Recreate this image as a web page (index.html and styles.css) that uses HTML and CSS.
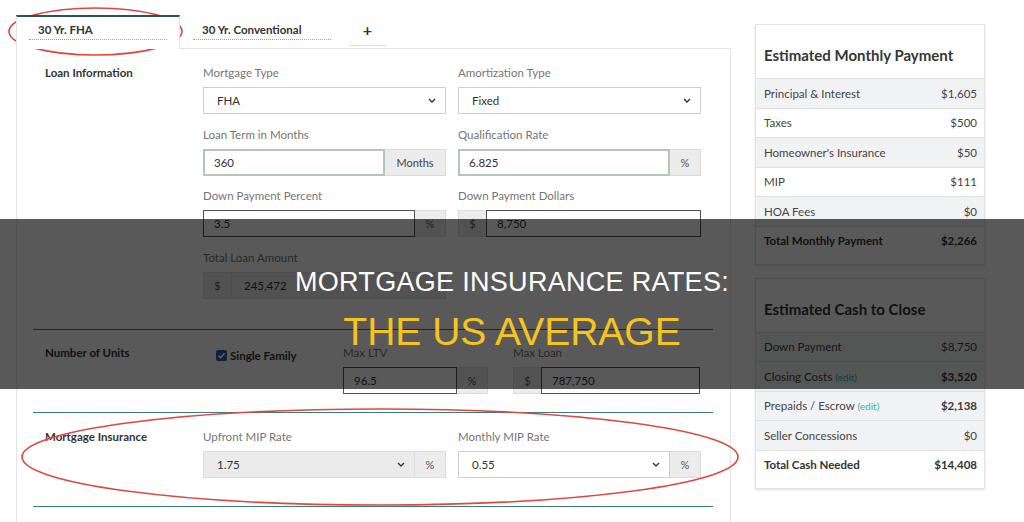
FILE: index.html
```html
<!DOCTYPE html>
<html lang="en">
<head>
    <meta charset="UTF-8">
    <meta name="viewport" content="width=device-width, initial-scale=1.0">
    <title>Mortgage Insurance Rates: The US Average</title>
    <link rel="stylesheet" href="styles.css">
</head>
<body>
    <div class="page">
        <div class="scenario">
            <div class="tabs">
                <div class="tab active"><span>30 Yr. FHA</span></div>
                <div class="tab"><span>30 Yr. Conventional</span></div>
                <div class="tab add"><span>+</span></div>
            </div>

            <div class="panel">
                <div class="section loan">
                    <div class="section-title">Loan Information</div>
                    <div class="fields">
                        <div class="field">
                            <label>Mortgage Type</label>
                            <div class="group">
                                <div class="select"><span>FHA</span><svg width="8" height="5" viewBox="0 0 8 5"><path d="M1 1l3 3 3-3" fill="none" stroke="#333" stroke-width="1.4"/></svg></div>
                            </div>
                        </div>
                        <div class="field">
                            <label>Amortization Type</label>
                            <div class="group">
                                <div class="select"><span>Fixed</span><svg width="8" height="5" viewBox="0 0 8 5"><path d="M1 1l3 3 3-3" fill="none" stroke="#333" stroke-width="1.4"/></svg></div>
                            </div>
                        </div>
                        <div class="field">
                            <label>Loan Term in Months</label>
                            <div class="group">
                                <input class="ok" type="text" value="360">
                                <span class="addon w-months">Months</span>
                            </div>
                        </div>
                        <div class="field">
                            <label>Qualification Rate</label>
                            <div class="group">
                                <input class="ok" type="text" value="6.825">
                                <span class="addon w-pct">%</span>
                            </div>
                        </div>
                        <div class="field">
                            <label>Down Payment Percent</label>
                            <div class="group">
                                <input class="dark" type="text" value="3.5">
                                <span class="addon w-pct">%</span>
                            </div>
                        </div>
                        <div class="field">
                            <label>Down Payment Dollars</label>
                            <div class="group">
                                <span class="addon pre w-dollar">$</span>
                                <input class="dark" type="text" value="8,750">
                            </div>
                        </div>
                        <div class="field">
                            <label>Total Loan Amount</label>
                            <div class="group">
                                <span class="addon pre w-dollar">$</span>
                                <input class="locked" type="text" value="245,472" readonly>
                            </div>
                        </div>
                    </div>
                </div>

                <div class="section units">
                    <div class="section-title">Number of Units</div>
                    <div class="unit-row">
                        <div class="check">
                            <svg width="11" height="11" viewBox="0 0 11 11"><rect width="11" height="11" rx="2" fill="#2c5cae"/><path d="M2.5 5.8l2 2 4-4.6" fill="none" stroke="#fff" stroke-width="1.7"/></svg>
                            <span>Single Family</span>
                        </div>
                        <div class="field ltv">
                            <label>Max LTV</label>
                            <div class="group">
                                <input class="dark" type="text" value="96.5">
                                <span class="addon w-pct">%</span>
                            </div>
                        </div>
                        <div class="field max-loan">
                            <label>Max Loan</label>
                            <div class="group">
                                <span class="addon pre w-dollar">$</span>
                                <input class="dark" type="text" value="787,750">
                            </div>
                        </div>
                    </div>
                </div>

                <div class="section insurance">
                    <div class="section-title">Mortgage Insurance</div>
                    <div class="fields">
                        <div class="field">
                            <label>Upfront MIP Rate</label>
                            <div class="group">
                                <div class="select grey"><span>1.75</span><svg width="8" height="5" viewBox="0 0 8 5"><path d="M1 1l3 3 3-3" fill="none" stroke="#333" stroke-width="1.4"/></svg></div>
                                <span class="addon w-pct">%</span>
                            </div>
                        </div>
                        <div class="field">
                            <label>Monthly MIP Rate</label>
                            <div class="group">
                                <div class="select"><span>0.55</span><svg width="8" height="5" viewBox="0 0 8 5"><path d="M1 1l3 3 3-3" fill="none" stroke="#333" stroke-width="1.4"/></svg></div>
                                <span class="addon w-pct">%</span>
                            </div>
                        </div>
                    </div>
                </div>
            </div>
        </div>

        <aside class="summary">
            <div class="card">
                <h2>Estimated Monthly Payment</h2>
                <div class="row shaded"><span>Principal &amp; Interest</span><span>$1,605</span></div>
                <div class="row"><span>Taxes</span><span>$500</span></div>
                <div class="row shaded"><span>Homeowner's Insurance</span><span>$50</span></div>
                <div class="row"><span>MIP</span><span>$111</span></div>
                <div class="row shaded"><span>HOA Fees</span><span>$0</span></div>
                <div class="row total"><span>Total Monthly Payment</span><span>$2,266</span></div>
            </div>

            <div class="card">
                <h2>Estimated Cash to Close</h2>
                <div class="row shaded"><span>Down Payment</span><span>$8,750</span></div>
                <div class="row shaded"><span>Closing Costs <a class="edit">(edit)</a></span><span class="strong">$3,520</span></div>
                <div class="row shaded"><span>Prepaids / Escrow <a class="edit">(edit)</a></span><span class="strong">$2,138</span></div>
                <div class="row shaded"><span>Seller Concessions</span><span>$0</span></div>
                <div class="row total"><span>Total Cash Needed</span><span>$14,408</span></div>
            </div>
        </aside>
    </div>

    <svg class="marks" width="1024" height="522" viewBox="0 0 1024 522">
        <ellipse cx="95.5" cy="31.5" rx="86.5" ry="23.5" fill="none" stroke="#dc4a3f" stroke-width="1.6"/>
        <ellipse cx="380" cy="457" rx="358" ry="48" fill="none" stroke="#dc4a3f" stroke-width="1.6"/>
    </svg>

    <div class="banner">
        <p class="banner-top">MORTGAGE INSURANCE RATES:</p>
        <p class="banner-bottom">THE US AVERAGE</p>
    </div>
</body>
</html>
```

FILE: styles.css
```css
* {
    box-sizing: border-box;
}
body {
    margin: 0;
    position: relative;
    height: 522px;
    overflow: hidden;
    font-family: Lato, "Open Sans", sans-serif;
    font-size: 11.5px;
    color: #333;
    background: #fff;
}
.page {
    display: flex;
    align-items: flex-start;
    padding: 15px 0 0 16px;
}
.scenario {
    width: 715px;
}

/* tabs */
.tabs {
    display: flex;
    align-items: flex-end;
}
.tab {
    position: relative;
    z-index: 1;
    margin-bottom: -1px;
    padding: 6px 12px 9px;
    border: 1px solid transparent;
    border-top: 2px solid transparent;
    border-bottom: none;
}
.tab span {
    display: block;
    width: 138px;
    padding: 0 0 2px 9px;
    border-bottom: 1px dotted #7fa6ba;
    font-weight: 700;
    line-height: 14px;
    color: #333;
}
.tab.active {
    background: #fff;
    border-color: #e3e3e3;
    border-top-color: #27525e;
}
.tab.add {
    margin-left: 4px;
    padding: 6px 0 3px;
}
.tab.add span {
    width: 37px;
    padding: 0 0 8px;
    border-bottom: 1px solid #dedede;
    text-align: center;
    font-size: 16px;
}

/* form panel */
.panel {
    min-height: 474px;
    padding: 0 17px 20px 16px;
    border: 1px solid #e3e3e3;
    border-bottom: none;
}
.section {
    display: flex;
    padding-top: 17px;
}
.section + .section {
    border-top: 1px solid #3e7c80;
}
.section.loan {
    padding-bottom: 30px;
}
.section.units {
    padding-top: 16px;
    padding-bottom: 18px;
}
.section.insurance {
    padding-bottom: 28px;
    border-bottom: 1px solid #3e7c80;
}
.section-title {
    width: 158px;
    padding-left: 12px;
    font-weight: 700;
    line-height: 14px;
    color: #333;
}
.fields {
    display: grid;
    grid-template-columns: 243px 243px;
    column-gap: 12px;
    row-gap: 13.7px;
    margin-left: 12px;
}
.field label {
    display: block;
    margin-bottom: 7px;
    line-height: 14px;
    color: #767676;
}
.group {
    display: flex;
    height: 27px;
}
.group input,
.select {
    flex: 1;
    min-width: 0;
    height: 27px;
    padding: 0 10px;
    border: 1px solid #cfcfcf;
    background: #fff;
    font-family: inherit;
    font-size: 11.5px;
    color: #333;
    outline: none;
}
.group input.ok {
    border: 2px solid #b3c6b9;
    padding-left: 9px;
}
.group input.dark {
    border-color: #555;
}
.group input.locked {
    background: #ececec;
    border-color: #dcdcdc;
    padding-left: 12px;
}
.select {
    display: flex;
    align-items: center;
    justify-content: space-between;
    padding: 0 9px 0 13px;
}
.select.grey {
    background: #ebebeb;
    border-color: #dcdcdc;
}
.addon {
    display: flex;
    align-items: center;
    justify-content: center;
    flex-shrink: 0;
    background: #ececec;
    border: 1px solid #dcdcdc;
    border-left: none;
    color: #555;
    font-size: 11px;
}
.addon.pre {
    border-left: 1px solid #dcdcdc;
    border-right: none;
}
.w-months {
    width: 61px;
    color: #444;
}
.w-pct {
    width: 31px;
}
.w-dollar {
    width: 28px;
}

/* units row */
.unit-row {
    display: flex;
    margin-left: 12px;
}
.check {
    display: flex;
    align-items: center;
    gap: 3px;
    width: 140px;
    height: 14px;
    margin-top: 2px;
    padding-left: 13px;
    font-weight: 700;
}
.field.ltv {
    width: 145px;
}
.field.max-loan {
    width: 187px;
    margin-left: 25px;
}

/* summary cards */
.summary {
    width: 230px;
    margin: 9px 0 0 24px;
}
.card {
    background: #fff;
    border: 1px solid #e3e3e3;
    box-shadow: 0 1px 2px rgba(0, 0, 0, 0.12);
}
.card + .card {
    margin-top: 13px;
}
.card h2 {
    margin: 0;
    padding: 21px 8px 14px;
    border-bottom: 1px solid #e3e3e3;
    font-size: 15px;
    font-weight: 700;
    line-height: 18px;
    color: #363636;
}
.row {
    display: flex;
    align-items: center;
    justify-content: space-between;
    height: 29.5px;
    padding: 0 7px 0 8px;
    border-bottom: 1px solid #e0e0e0;
    color: #444;
}
.row.shaded {
    background: #f1f2f4;
}
.row.total {
    height: 37px;
    align-items: flex-start;
    padding-top: 7px;
    border-bottom: none;
    line-height: 14px;
    font-weight: 700;
    color: #333;
}
.edit {
    color: #36b3a4;
    font-size: 10px;
}
.strong {
    font-weight: 700;
    color: #3a3a3a;
}

/* overlays */
.marks {
    position: absolute;
    top: 0;
    left: 0;
    pointer-events: none;
}
.banner {
    position: absolute;
    top: 219px;
    left: 0;
    right: 0;
    height: 170px;
    padding-top: 47px;
    background: rgba(0, 0, 0, 0.65);
    text-align: center;
    font-family: "Liberation Sans", Arial, sans-serif;
}
.banner p {
    margin: 0;
}
.banner-top {
    font-size: 27px;
    line-height: 32px;
    letter-spacing: 0.3px;
    color: #fff;
}
.banner-bottom {
    margin-top: 11px !important;
    font-size: 39px;
    line-height: 46px;
    color: #f7c41f;
}
```
